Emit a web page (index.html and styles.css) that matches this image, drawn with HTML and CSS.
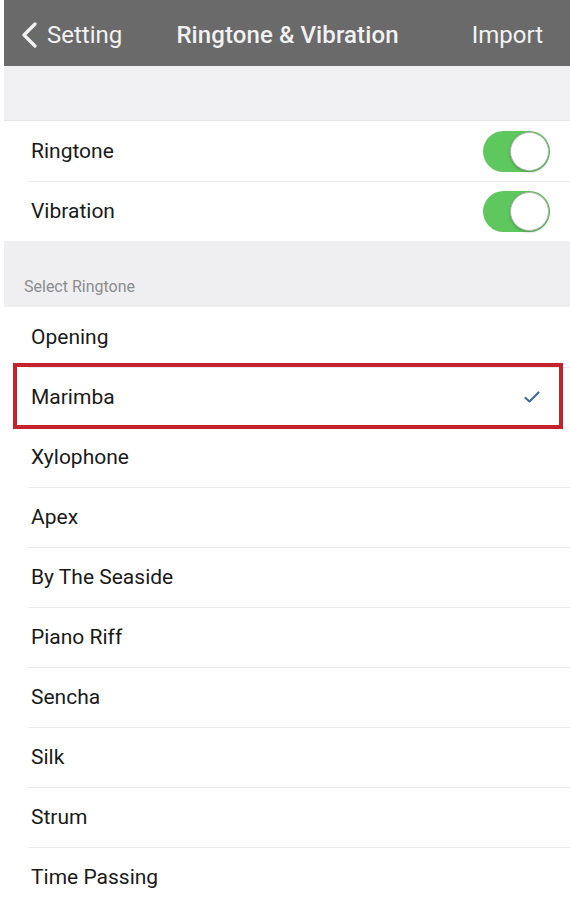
FILE: index.html
```html
<!DOCTYPE html>
<html lang="en">

<head>
  <meta charset="UTF-8" />
  <meta name="viewport" content="width=device-width, initial-scale=1.0" />
  <title>Ringtone &amp; Vibration</title>
  <link rel="stylesheet" href="styles.css">
</head>

<body>
  <div class="screen">
    <div class="nav">
      <a class="nav-back" href="javascript:;">
        <svg width="18" height="26" viewBox="0 0 18 26">
          <path d="M15 2 L4 13 L15 24" fill="none" stroke="#f2f2f2" stroke-width="3.2" stroke-linecap="round" stroke-linejoin="round" />
        </svg>
        <span>Setting</span>
      </a>
      <h1>Ringtone &amp; Vibration</h1>
      <a class="nav-right" href="javascript:;">Import</a>
    </div>

    <div class="gap"></div>

    <ul class="group">
      <li class="row">
        <span>Ringtone</span>
        <span class="switch on"><i></i></span>
      </li>
      <li class="row">
        <span>Vibration</span>
        <span class="switch on"><i></i></span>
      </li>
    </ul>

    <div class="section-title">Select Ringtone</div>

    <ul class="group list">
      <li class="row"><span>Opening</span></li>
      <li class="row selected">
        <span>Marimba</span>
        <svg class="check" width="18" height="14" viewBox="0 0 18 14">
          <path d="M2.5 8 L6.5 11.5 L15.5 2.5" fill="none" stroke="#3f6c9e" stroke-width="2.2" stroke-linecap="round" stroke-linejoin="round" />
        </svg>
      </li>
      <li class="row"><span>Xylophone</span></li>
      <li class="row"><span>Apex</span></li>
      <li class="row"><span>By The Seaside</span></li>
      <li class="row"><span>Piano Riff</span></li>
      <li class="row"><span>Sencha</span></li>
      <li class="row"><span>Silk</span></li>
      <li class="row"><span>Strum</span></li>
      <li class="row"><span>Time Passing</span></li>
    </ul>
  </div>
</body>

</html>
```

FILE: styles.css
```css
* {
  margin: 0;
  padding: 0;
  box-sizing: border-box;
}

body {
  font-family: Roboto, "Liberation Sans", Arial, sans-serif;
  background: #fff;
  color: #1a1a1a;
}

.screen {
  width: 566px;
  margin-left: 4px;
}

.nav {
  height: 66px;
  background: #6a6a6a;
  display: grid;
  grid-template-columns: 1fr auto 1fr;
  align-items: center;
  padding: 4px 27px 0 16px;
  color: #f2f2f2;
}

.nav a {
  color: #f2f2f2;
  text-decoration: none;
  font-size: 24px;
}

.nav-back {
  display: flex;
  align-items: center;
  gap: 9px;
}

.nav-right {
  justify-self: end;
}

.nav h1 {
  font-size: 24px;
  font-weight: 500;
  margin-left: 12px;
  letter-spacing: 0.1px;
}

.gap {
  height: 55px;
  background: #f0f0f2;
  border-bottom: 1px solid #e6e6e6;
}

.group {
  list-style: none;
  background: #fff;
}

.row {
  position: relative;
  height: 60px;
  display: flex;
  align-items: center;
  justify-content: space-between;
  padding: 0 20px 0 27px;
  font-size: 21px;
}

.row + .row::before {
  content: "";
  position: absolute;
  left: 24px;
  right: 0;
  top: 0;
  border-top: 1px solid #ebebeb;
}

.switch {
  width: 67px;
  height: 41px;
  border-radius: 21px;
  background: #5ec85e;
  display: flex;
  justify-content: flex-end;
  padding: 1px;
}

.switch i {
  width: 39px;
  height: 39px;
  border-radius: 50%;
  background: #fff;
  border: 1px solid #b5b5b5;
  box-shadow: 0 1px 3px rgba(0, 0, 0, 0.25);
}

.section-title {
  height: 66px;
  background: #efeff1;
  padding: 36px 0 0 20px;
  font-size: 16px;
  color: #8c8c8c;
}

.list .row:last-child::after {
  content: "";
  position: absolute;
  left: 24px;
  right: 0;
  bottom: -1px;
  border-top: 1px solid #ebebeb;
}

.selected::after {
  content: "";
  position: absolute;
  left: 9px;
  right: 7px;
  top: -4px;
  bottom: -2px;
  border: 4px solid #c4222c;
}

.selected + .row::before {
  display: none;
}

.check {
  margin-right: 9px;
}
```
